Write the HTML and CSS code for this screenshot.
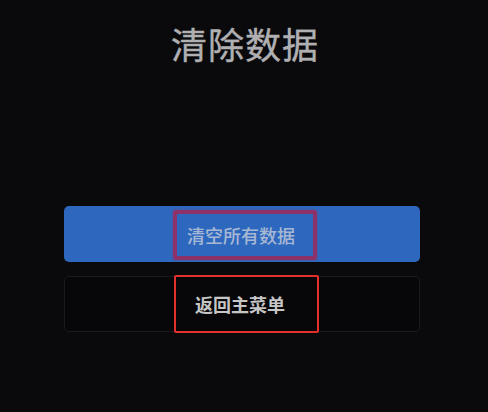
FILE: index.html
```html
<!DOCTYPE html>
<html lang="zh">
<head>
<meta charset="utf-8">
<title>清除数据</title>
<link rel="stylesheet" href="styles.css">
</head>
<body>
<div class="screen">
  <h1 class="title">清除数据</h1>
  <div class="actions">
    <div class="btn btn-primary"><span class="mark mark-purple">清空所有数据</span></div>
    <div class="btn btn-ghost"><span class="mark mark-red">返回主菜单</span></div>
  </div>
</div>
</body>
</html>
```
FILE: styles.css
```css
html, body {
  margin: 0;
  padding: 0;
  background: #0a0a0c;
}
.screen {
  width: 488px;
  height: 412px;
  background: #0a0a0c;
  font-family: "Noto Sans CJK SC", "Noto Sans", sans-serif;
  overflow: hidden;
}
.title {
  margin: 21px 0 0;
  height: 44px;
  line-height: 44px;
  font-size: 36px;
  font-weight: 400;
  color: #b0b0b2;
  text-align: center;
  letter-spacing: 1px;
  padding-left: 2px;
  -webkit-text-stroke: 0.4px #b0b0b2;
}
.actions {
  margin: 141px 0 0 64px;
  width: 356px;
  display: flex;
  flex-direction: column;
  gap: 14px;
}
.btn {
  box-sizing: border-box;
  height: 56px;
  border-radius: 5px;
  display: flex;
  align-items: center;
  justify-content: center;
  font-size: 18px;
}
.btn-primary {
  background: #2e68be;
  color: #a8b8d4;
  font-weight: 500;
}
.btn-ghost {
  border: 1px solid #1a1a1d;
  background: #070709;
  color: #c6c6c6;
  font-weight: 700;
}
.mark {
  box-sizing: border-box;
  display: flex;
  align-items: center;
  justify-content: center;
  flex: none;
}
.mark-purple {
  width: 144px;
  height: 50px;
  margin-left: 6px;
  margin-top: 1px;
  border: 4px solid #8c3268;
  border-radius: 3px;
  box-shadow: 0 0 2px rgba(140, 50, 100, 0.8);
  padding-right: 8px;
}
.mark-red {
  width: 145px;
  height: 58px;
  margin-left: 8px;
  border: 2px solid #e2302a;
  border-radius: 2px;
  padding-right: 12px;
}
```
